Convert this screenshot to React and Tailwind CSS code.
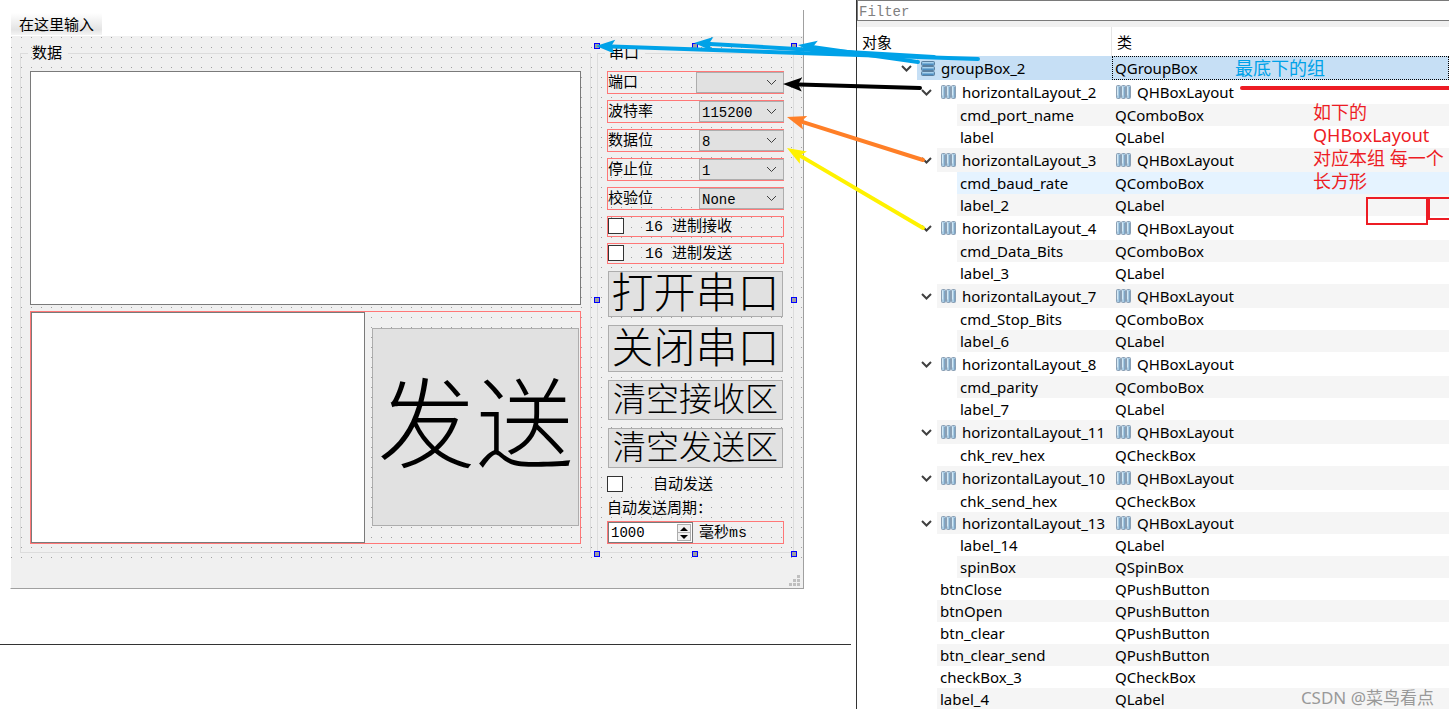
import React from 'react';

const combos = [
  { id: 'port', label: '端口', value: '', width: 'w-[88px]' },
  { id: 'baud', label: '波特率', value: '115200', width: 'w-[85px]' },
  { id: 'data', label: '数据位', value: '8', width: 'w-[85px]' },
  { id: 'stop', label: '停止位', value: '1', width: 'w-[85px]' },
  { id: 'parity', label: '校验位', value: 'None', width: 'w-[85px]' },
];

const hexChecks = [
  { id: 'revHex', label: '16 进制接收' },
  { id: 'sendHex', label: '16 进制发送' },
];

const buttons = [
  { text: '打开串口', size: 'h-[46px] text-[42px]' },
  { text: '关闭串口', size: 'h-[47px] text-[42px]' },
  { text: '清空接收区', size: 'h-[40px] text-[33px]' },
  { text: '清空发送区', size: 'h-[40px] text-[33px]' },
];

// type: group | layout | leaf | root
const tree = [
  { name: 'groupBox_2', cls: 'QGroupBox', type: 'group' },
  { name: 'horizontalLayout_2', cls: 'QHBoxLayout', type: 'layout' },
  { name: 'cmd_port_name', cls: 'QComboBox', type: 'leaf' },
  { name: 'label', cls: 'QLabel', type: 'leaf' },
  { name: 'horizontalLayout_3', cls: 'QHBoxLayout', type: 'layout' },
  { name: 'cmd_baud_rate', cls: 'QComboBox', type: 'leaf', hover: true },
  { name: 'label_2', cls: 'QLabel', type: 'leaf' },
  { name: 'horizontalLayout_4', cls: 'QHBoxLayout', type: 'layout' },
  { name: 'cmd_Data_Bits', cls: 'QComboBox', type: 'leaf' },
  { name: 'label_3', cls: 'QLabel', type: 'leaf' },
  { name: 'horizontalLayout_7', cls: 'QHBoxLayout', type: 'layout' },
  { name: 'cmd_Stop_Bits', cls: 'QComboBox', type: 'leaf' },
  { name: 'label_6', cls: 'QLabel', type: 'leaf' },
  { name: 'horizontalLayout_8', cls: 'QHBoxLayout', type: 'layout' },
  { name: 'cmd_parity', cls: 'QComboBox', type: 'leaf' },
  { name: 'label_7', cls: 'QLabel', type: 'leaf' },
  { name: 'horizontalLayout_11', cls: 'QHBoxLayout', type: 'layout' },
  { name: 'chk_rev_hex', cls: 'QCheckBox', type: 'leaf' },
  { name: 'horizontalLayout_10', cls: 'QHBoxLayout', type: 'layout' },
  { name: 'chk_send_hex', cls: 'QCheckBox', type: 'leaf' },
  { name: 'horizontalLayout_13', cls: 'QHBoxLayout', type: 'layout', short: true },
  { name: 'label_14', cls: 'QLabel', type: 'leaf' },
  { name: 'spinBox', cls: 'QSpinBox', type: 'leaf' },
  { name: 'btnClose', cls: 'QPushButton', type: 'root' },
  { name: 'btnOpen', cls: 'QPushButton', type: 'root' },
  { name: 'btn_clear', cls: 'QPushButton', type: 'root' },
  { name: 'btn_clear_send', cls: 'QPushButton', type: 'root' },
  { name: 'checkBox_3', cls: 'QCheckBox', type: 'root' },
  { name: 'label_4', cls: 'QLabel', type: 'root' },
];

const handles = [
  'left-[-3px] top-0',
  'left-[95px] top-0',
  'right-[-3px] top-0',
  'left-[-3px] top-[254px]',
  'right-[-3px] top-[254px]',
  'left-[-3px] bottom-[-4px]',
  'left-[95px] bottom-[-4px]',
  'right-[-3px] bottom-[-4px]',
];

const Chevron = ({ className, width = 1 }) => (
  <svg className={className} width="11" height="7" viewBox="0 0 11 7" fill="none">
    <path d="M1 1l4.5 4.5L10 1" stroke="#404040" strokeWidth={width} />
  </svg>
);

const LayoutIcon = () => (
  <svg className="shrink-0" width="15" height="14" viewBox="0 0 15 14">
    {[0, 5, 10].map((x) => (
      <g key={x}>
        <rect x={x + 0.5} y="0.5" width="4" height="13" rx="1" fill="#a9cbe3" stroke="#8b9fb3" />
        <path d={`M${x + 1.5} 1.5v9`} stroke="#d3e9f6" />
        <path d={`M${x + 3.5} 2v11`} stroke="#7fa6c6" />
      </g>
    ))}
  </svg>
);

const GroupIcon = () => (
  <svg className="shrink-0" width="14" height="15" viewBox="0 0 14 15">
    {[0, 5, 10].map((y) => (
      <g key={y}>
        <rect x="0.5" y={y + 0.5} width="13" height="4" rx="1" fill="#79aed6" stroke="#5b7f9f" />
        <path d={`M1.5 ${y + 1.5}h11`} stroke="#a9d2ee" />
        <path d={`M1.5 ${y + 3.5}h11`} stroke="#4f8fc2" />
      </g>
    ))}
  </svg>
);

const Arrow = ({ from, to, color, head = 19 }) => {
  const angle = (Math.atan2(from[1] - to[1], from[0] - to[0]) * 180) / Math.PI;
  const length = Math.hypot(from[0] - to[0], from[1] - to[1]);
  return (
    <g transform={`translate(${to[0]} ${to[1]}) rotate(${angle})`} fill={color} stroke={color}>
      <path d={`M${head - 3} 0H${length}`} strokeWidth="4" strokeLinecap="round" />
      <path d={`M0 0L${head} -7L${head - 4} 0L${head} 7Z`} stroke="none" />
    </g>
  );
};

const CheckBox = ({ id, label, gap }) => (
  <div className={`flex items-center ${gap}`}>
    <input
      id={id}
      type="checkbox"
      className="h-4 w-4 shrink-0 appearance-none border border-[#333333] bg-white"
    />
    <label htmlFor={id} className="pt-1 leading-4 whitespace-pre">{label}</label>
  </div>
);

const DataGroup = () => (
  <fieldset className="min-w-0 flex-1 border border-[#dcdcdc] px-[9px] pt-2 pb-2">
    <legend className="-ml-0.5 h-5 pr-1.5 pl-1 leading-6">数据</legend>
    <textarea
      aria-label="接收区"
      className="block h-[234px] w-full resize-none border border-[#7a7a7a] bg-white"
    />
    <div className="mt-1.5 flex h-[233px] items-start gap-[7px] border border-[#ff7777] pr-px">
      <textarea
        aria-label="发送区"
        className="block h-full min-w-0 flex-1 resize-none border border-[#7a7a7a] bg-white"
      />
      <button className="mt-4 h-[198px] w-[207px] border border-[#adadad] bg-[#e1e1e1] font-['Liberation_Serif','Noto_Sans_CJK_SC',serif] text-[98px] leading-none font-light whitespace-nowrap">
        发送
      </button>
    </div>
  </fieldset>
);

const SerialGroup = () => (
  <div className="relative w-[197px] shrink-0">
    <fieldset className="border border-[#dcdcdc] px-[9px] pt-2 pb-2">
      <legend className="-ml-0.5 h-5 pr-1.5 pl-1 leading-6">串口</legend>
      <div className="flex flex-col gap-1.5">
        {combos.map((c) => (
          <div key={c.id} className="flex h-[23px] justify-between border border-[#ff7777]">
            <label htmlFor={c.id} className="leading-6">{c.label}</label>
            <div className={`relative -mr-px ${c.width}`}>
              <select
                id={c.id}
                defaultValue={c.value}
                className="block h-[21px] w-full appearance-none border border-[#adadad] bg-[#e1e1e1] pt-0.5 pl-0.5 text-sm leading-[19px]"
              >
                <option value={c.value}>{c.value}</option>
              </select>
              <Chevron className="pointer-events-none absolute top-[7px] right-[7px]" />
            </div>
          </div>
        ))}
        {hexChecks.map((c) => (
          <div key={c.id} className="flex h-[21px] items-start border border-[#ff7777] pt-px">
            <CheckBox id={c.id} label={c.label} gap="h-4 gap-[21px]" />
          </div>
        ))}
      </div>
      <div className="mt-[7px] flex flex-col gap-2 px-px">
        {buttons.map((b) => (
          <button
            key={b.text}
            className={`flex items-center justify-center border border-[#adadad] bg-[#e1e1e1] font-['Liberation_Serif','Noto_Sans_CJK_SC',serif] leading-none font-light whitespace-nowrap ${b.size}`}
          >
            {b.text}
          </button>
        ))}
      </div>
      <div className="mt-2">
        <CheckBox id="autoSend" label="自动发送" gap="h-4 gap-[30px]" />
      </div>
      <label htmlFor="period" className="mt-1.5 mb-[3px] block h-5 leading-6">自动发送周期：</label>
      <div className="flex h-[23px] items-start border border-[#ff7777]">
        <div className="flex h-[21px] w-[85px] border border-[#7a7a7a] bg-white">
          <input
            id="period"
            type="text"
            defaultValue="1000"
            className="min-w-0 flex-1 bg-transparent pt-0.5 pl-0.5 text-sm leading-[17px]"
          />
          <div className="my-px mr-px flex w-[14px] flex-col">
            <button
              aria-label="增加"
              className="flex flex-1 items-center justify-center border border-[#adadad] bg-[#f0f0f0]"
            >
              <svg width="8" height="4" viewBox="0 0 8 4"><path d="M0 4l4-4 4 4z" /></svg>
            </button>
            <button
              aria-label="减少"
              className="flex flex-1 items-center justify-center border border-t-0 border-[#adadad] bg-[#f0f0f0]"
            >
              <svg width="8" height="4" viewBox="0 0 8 4"><path d="M0 0l4 4 4-4z" /></svg>
            </button>
          </div>
        </div>
        <span className="ml-1.5 leading-6">毫秒ms</span>
      </div>
    </fieldset>
    {handles.map((pos) => (
      <span key={pos} className={`absolute h-1.5 w-1.5 border border-[#0000ff] bg-[#a0a0a0] ${pos}`} />
    ))}
  </div>
);

const FormWindow = () => (
  <div className="mt-2.5 mr-[52px] ml-2.5 border-r border-b border-l border-[#a0a0a0] border-l-white">
    <div className="h-[26px] pt-0.5 font-['Noto_Sans','Noto_Sans_CJK_SC',sans-serif]">
      <button className="h-[22px] w-[91px] bg-linear-to-b from-white via-[#e4e4e4] via-75% to-[#f4f4f4] text-[15px] leading-[22px]">
        在这里输入
      </button>
    </div>
    <div className="bg-[#f0f0f0] font-['Liberation_Mono','Noto_Sans_CJK_SC',monospace] text-[15px]">
      <div className="flex gap-1.5 bg-[conic-gradient(at_1px_1px,transparent_75%,#a0a0a0_0)] bg-[length:10px_10px] bg-[position:0_1px] px-[9px] pt-[7px] pb-[5px]">
        <DataGroup />
        <SerialGroup />
      </div>
      <div className="flex h-[30px] items-end justify-end pr-[3px] pb-[2px]">
        <svg width="11" height="11" viewBox="0 0 11 11" fill="#bfbfbf">
          {[[8, 0], [4, 4], [8, 4], [0, 8], [4, 8], [8, 8]].map(([x, y]) => (
            <rect key={`${x}-${y}`} x={x} y={y} width="3" height="3" />
          ))}
        </svg>
      </div>
    </div>
  </div>
);

const indents = { group: 'ml-[60px]', layout: 'ml-20', leaf: 'ml-[100px]', root: 'ml-20' };

const TreeRow = ({ item, index }) => {
  const hasIcon = item.type === 'group' || item.type === 'layout';
  const height = hasIcon && !item.short ? 'h-6' : 'h-[22px]';
  let bg = index % 2 === 0 ? 'bg-[#f5f5f5]' : 'bg-white';
  if (item.hover) bg = 'bg-[#e5f3ff]';
  if (item.type === 'group') bg = 'bg-[#c6dff5]';

  return (
    <tr>
      <td className="p-0">
        <div className={`relative flex items-center ${height} ${bg} ${indents[item.type]} ${hasIcon ? 'gap-1.5 pl-1' : 'pl-[3px]'}`}>
          {hasIcon && <Chevron width={2} className="absolute -left-4" />}
          {item.type === 'group' && <GroupIcon />}
          {item.type === 'layout' && <LayoutIcon />}
          <span>{item.name}</span>
        </div>
      </td>
      <td className="p-0">
        <div
          className={`flex items-center gap-1.5 ${height} ${bg} ${item.type === 'layout' ? 'pl-1' : 'pl-[3px]'} ${
            item.type === 'group' ? 'outline-1 -outline-offset-1 outline-dotted outline-black' : ''
          }`}
        >
          {item.type === 'layout' && <LayoutIcon />}
          <span>{item.cls}</span>
        </div>
      </td>
    </tr>
  );
};

const ObjectInspector = () => (
  <div className="relative h-[709px] overflow-hidden border-l border-[#333333] font-['Noto_Sans','Noto_Sans_CJK_SC',sans-serif] text-[15px]">
    <input
      type="text"
      placeholder="Filter"
      aria-label="Filter"
      className="block h-[21px] w-full border border-r-0 border-[#7a7a7a] bg-white pt-0.5 pl-px font-['Liberation_Mono',monospace] text-sm leading-[17px] placeholder:text-[#808080]"
    />
    <div className="h-1.5 bg-[#f0f0f0]" />
    <table className="w-full table-fixed border-collapse leading-5 whitespace-nowrap">
      <colgroup>
        <col className="w-[255px]" />
        <col />
      </colgroup>
      <thead>
        <tr className="h-[29px] text-left">
          <th className="p-0 pl-[5px] font-normal">
            <div className="h-[29px] border-r border-[#e5e5e5] leading-[31px]">对象</div>
          </th>
          <th className="p-0 pl-[5px] font-normal">
            <div className="h-[29px] leading-[31px]">类</div>
          </th>
        </tr>
      </thead>
      <tbody>
        {tree.map((item, i) => (
          <TreeRow key={item.name} item={item} index={i} />
        ))}
      </tbody>
    </table>
    <p className="absolute top-[56px] left-[378px] text-lg leading-6 text-[#00a2e8]">最底下的组</p>
    <p className="absolute top-[101px] left-[456px] text-lg leading-[23px] whitespace-nowrap text-[#ed1c24]">
      如下的<br />
      QHBoxLayout<br />
      对应本组 每一个<br />
      长方形
    </p>
    <p className="absolute right-[15px] bottom-0 text-[17px] leading-[22px] text-[#999999]">CSDN @菜鸟看点</p>
  </div>
);

const Annotations = () => (
  <svg
    className="pointer-events-none absolute top-0 left-0 h-[240px] w-full"
    viewBox="0 0 1449 240"
    preserveAspectRatio="none"
    fill="none"
  >
    <Arrow from={[978, 59]} to={[596, 46]} color="#00a2e8" />
    <Arrow from={[934, 57]} to={[694, 43]} color="#00a2e8" />
    <Arrow from={[918, 62]} to={[798, 45]} color="#00a2e8" />
    <Arrow from={[920, 88]} to={[783, 84]} color="#000000" />
    <Arrow from={[923, 160]} to={[787, 117]} color="#ff7f27" />
    <Arrow from={[923, 228]} to={[787, 148]} color="#fff200" />
    <path d="M1242 88H1449" stroke="#ed1c24" strokeWidth="4" strokeLinecap="round" />
    <path d="M1367 198H1427V224H1367ZM1449 198H1429V219H1449" stroke="#ed1c24" strokeWidth="2" />
  </svg>
);

const App = () => (
  <div className="relative grid grid-cols-[856fr_593fr] overflow-hidden bg-white text-black">
    <div className="min-w-0">
      <FormWindow />
      <hr className="mt-[55px] mr-[5px] border-[#333333]" />
    </div>
    <ObjectInspector />
    <Annotations />
  </div>
);

export default App;
